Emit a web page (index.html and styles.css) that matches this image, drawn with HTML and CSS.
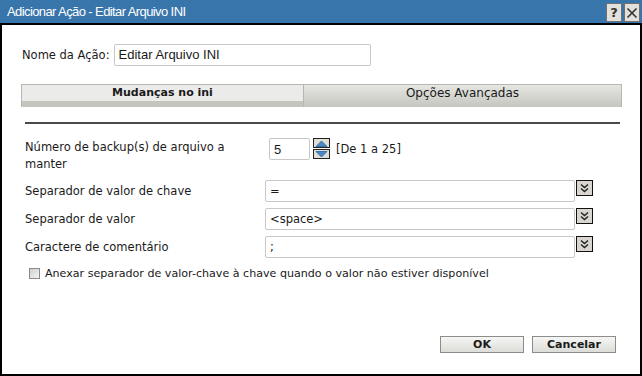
FILE: index.html
```html
<!DOCTYPE html>
<html lang="pt">
<head>
    <meta charset="UTF-8">
    <title>Adicionar Ação - Editar Arquivo INI</title>
    <link rel="stylesheet" href="styles.css">
</head>
<body>
    <div class="dialog">
        <div class="titlebar">
            <span class="title">Adicionar Ação - Editar Arquivo INI</span>
            <div class="title-buttons">
                <span class="tbtn">?</span>
                <span class="tbtn">
                    <svg width="12" height="12" viewBox="0 0 12 12"><path d="M1.5 1.5 L10.5 10.5 M10.5 1.5 L1.5 10.5" stroke="#333" stroke-width="1.6"/></svg>
                </span>
            </div>
        </div>

        <div class="content">
            <div class="name-row">
                <label class="name-label">Nome da Ação:</label>
                <div class="name-input">Editar Arquivo INI</div>
            </div>

            <div class="tabs">
                <div class="tab active">Mudanças no ini</div>
                <div class="tab">Opções Avançadas</div>
            </div>

            <div class="divider"></div>

            <div class="form">
                <div class="label two-line">Número de backup(s) de arquivo a manter</div>
                <div class="control spin-row">
                    <div class="spin-input">5</div>
                    <div class="spinner">
                        <span class="spin-btn">
                            <svg width="13" height="7" viewBox="0 0 13 7"><path d="M1 6.5 L6.5 1 L12 6.5 Z" fill="#4a8ac4" stroke="#2a5f93" stroke-width="0.8"/></svg>
                        </span>
                        <span class="spin-btn">
                            <svg width="13" height="7" viewBox="0 0 13 7"><path d="M1 0.5 L6.5 6 L12 0.5 Z" fill="#4a8ac4" stroke="#2a5f93" stroke-width="0.8"/></svg>
                        </span>
                    </div>
                    <span class="range">[De 1 a 25]</span>
                </div>

                <div class="label">Separador de valor de chave</div>
                <div class="control combo">
                    <div class="combo-input">=</div>
                    <span class="combo-btn">
                        <svg width="11" height="11" viewBox="0 0 11 11"><path d="M2 1.5 L5.5 4.5 L9 1.5 M2 5.5 L5.5 8.5 L9 5.5" fill="none" stroke="#222" stroke-width="1.4"/></svg>
                    </span>
                </div>

                <div class="label">Separador de valor</div>
                <div class="control combo">
                    <div class="combo-input">&lt;space&gt;</div>
                    <span class="combo-btn">
                        <svg width="11" height="11" viewBox="0 0 11 11"><path d="M2 1.5 L5.5 4.5 L9 1.5 M2 5.5 L5.5 8.5 L9 5.5" fill="none" stroke="#222" stroke-width="1.4"/></svg>
                    </span>
                </div>

                <div class="label">Caractere de comentário</div>
                <div class="control combo">
                    <div class="combo-input">;</div>
                    <span class="combo-btn">
                        <svg width="11" height="11" viewBox="0 0 11 11"><path d="M2 1.5 L5.5 4.5 L9 1.5 M2 5.5 L5.5 8.5 L9 5.5" fill="none" stroke="#222" stroke-width="1.4"/></svg>
                    </span>
                </div>
            </div>

            <div class="check-row">
                <span class="checkbox"></span>
                <span>Anexar separador de valor-chave à chave quando o valor não estiver disponível</span>
            </div>
        </div>

        <div class="footer">
            <button class="btn">OK</button>
            <button class="btn">Cancelar</button>
        </div>
    </div>
</body>
</html>
```

FILE: styles.css
```css
:root {
    --title-blue: #3875ab;
    --border-dark: #000;
    --field-border: #c8c8c8;
    --tab-light: #ebebe9;
    --tab-edge: #b8b8b0;
    --btn-grey: #d8d6ce;
    --text: #1a1a1a;
}

html, body {
    margin: 0;
    padding: 0;
}

body {
    font-family: "DejaVu Sans", Verdana, sans-serif;
    font-size: 11.5px;
    color: var(--text);
    background: #fff;
}

.dialog {
    width: 642px;
    height: 376px;
    box-sizing: border-box;
    border: 2px solid var(--border-dark);
    border-top: none;
    display: flex;
    flex-direction: column;
}

.titlebar {
    height: 23px;
    background: var(--title-blue);
    border-bottom: 2px solid var(--border-dark);
    display: flex;
    align-items: center;
    justify-content: space-between;
    margin: 0 -2px;
    padding: 0 2px 0 7px;
}

/* tight caption, like the original narrow face */
.title {
    color: #fff;
    font-family: "Liberation Sans", Arial, sans-serif;
    font-size: 13px;
    letter-spacing: -0.6px;
}

.title-buttons {
    display: flex;
    gap: 2px;
    align-self: flex-start;
    margin-top: 3px;
}

.tbtn {
    width: 14px;
    height: 17px;
    background: #e2e1dc;
    border: 1px solid #707070;
    display: flex;
    align-items: center;
    justify-content: center;
    font-weight: bold;
    font-size: 13px;
    color: #333;
}

.content {
    flex: 1;
    padding: 19px 18px 0 19px;
}

.name-row {
    display: flex;
    align-items: center;
    gap: 4px;
}

.name-label {
    padding-left: 1px;
}

.name-input {
    width: 251px;
    height: 20px;
    border: 1px solid var(--field-border);
    border-radius: 2px;
    padding-left: 4px;
    font-family: "Liberation Sans", Arial, sans-serif;
    font-size: 13px;
    line-height: 20px;
}

.tabs {
    display: flex;
    margin-top: 18px;
    height: 22px;
    border: 1px solid var(--tab-edge);
    border-bottom: none;
}

.tab {
    flex: 1;
    text-align: center;
    line-height: 16px;
    font-size: 12px;
    background: linear-gradient(#e6e6e2, #c5c6bf);
}

.tab.active {
    flex: 0 0 281px;
    font-weight: bold;
    font-size: 11px;
    background: linear-gradient(var(--tab-light) 0, var(--tab-light) 16px, #c4c5bd 16px, #c4c5bd 22px);
    border-right: 1px solid var(--tab-edge);
}

.divider {
    margin: 15px 2px 0 4px;
    height: 2px;
    background: #4a4a4a;
}

.form {
    display: grid;
    grid-template-columns: 240px 1fr;
    row-gap: 6px;
    margin-top: 14px;
    padding-left: 4px;
}

.label {
    display: flex;
    align-items: center;
    line-height: 17px;
}

.label.two-line {
    align-items: flex-start;
    width: 210px;
    padding-top: 1px;
    margin-bottom: 1px;
}

.control {
    display: flex;
    align-items: flex-start;
}

.spin-row {
    padding-left: 4px;
    gap: 2px;
}

.spin-input {
    width: 35px;
    height: 20px;
    border: 1px solid var(--field-border);
    border-radius: 2px;
    padding-left: 4px;
    font-family: "Liberation Sans", Arial, sans-serif;
    font-size: 13px;
    line-height: 21px;
}

.spinner {
    display: flex;
    flex-direction: column;
    gap: 1px;
    margin-left: 1px;
}

.spin-btn {
    width: 15px;
    height: 8px;
    background: #dfded8;
    border: 1px solid #222;
    display: flex;
    align-items: center;
    justify-content: center;
}

.range {
    margin-left: 4px;
    margin-top: 4px;
}

.combo {
    gap: 1px;
}

.combo-input {
    width: 304px;
    height: 20px;
    border: 1px solid var(--field-border);
    border-radius: 2px;
    padding-left: 4px;
    line-height: 21px;
}

.combo-btn {
    width: 15px;
    height: 14px;
    background: var(--btn-grey);
    border: 1px solid #111;
    display: flex;
    align-items: center;
    justify-content: center;
}

.check-row {
    display: flex;
    align-items: center;
    gap: 5px;
    margin-top: 9px;
    padding-left: 8px;
    font-size: 11.1px;
}

.checkbox {
    width: 9px;
    height: 9px;
    border: 1px solid #8a8a8a;
    background: linear-gradient(135deg, #cfcfcf, #f4f4f4);
}

.footer {
    display: flex;
    justify-content: flex-end;
    gap: 8px;
    padding: 0 24px 21px 0;
}

.btn {
    width: 84px;
    height: 17px;
    padding: 0;
    border: 1px solid #8c8c8c;
    background: linear-gradient(#f6f6f4, #dcdcd8);
    font-family: "DejaVu Sans", Verdana, sans-serif;
    font-weight: bold;
    font-size: 11px;
    color: #1a1a1a;
    line-height: 15px;
}
```
